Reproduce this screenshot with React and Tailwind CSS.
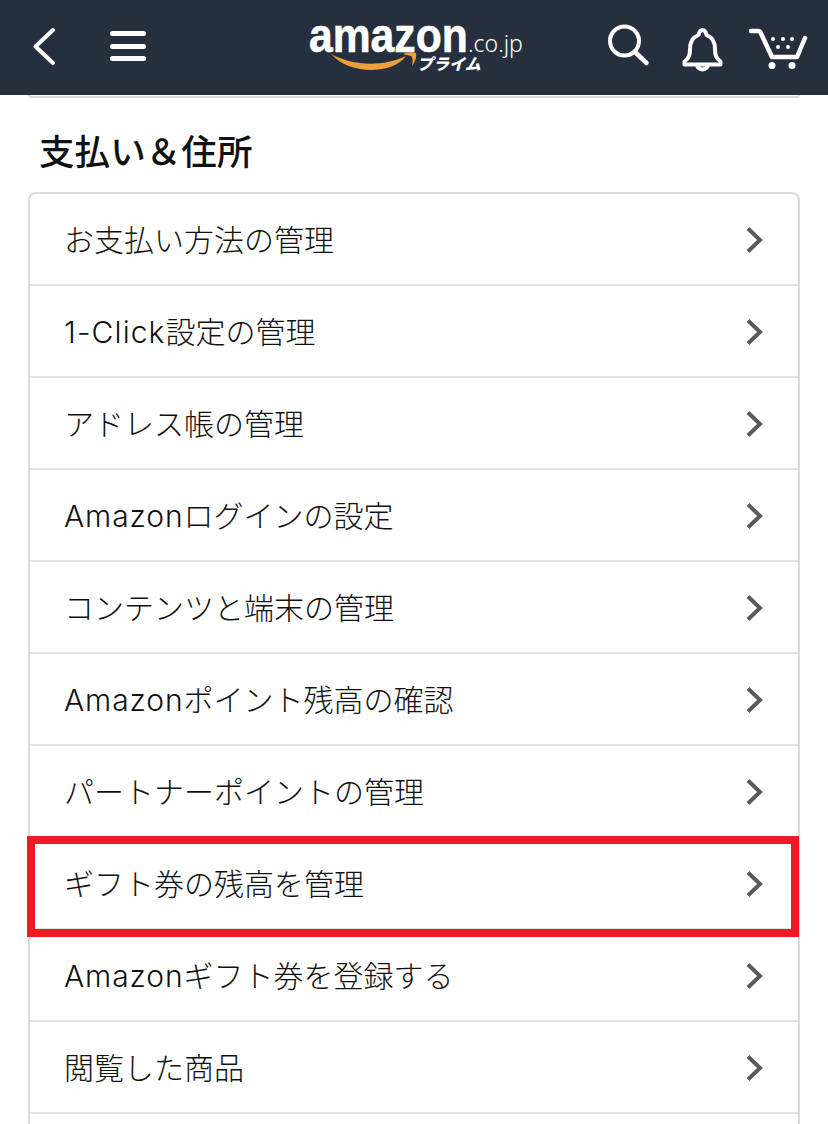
const rows = [
  { text: "お支払い方法の管理" },
  { latin: "1-Click", spacing: "tracking-[1.1px]", text: "設定の管理" },
  { text: "アドレス帳の管理" },
  { latin: "Amazon", spacing: "tracking-[0.9px]", text: "ログインの設定" },
  { text: "コンテンツと端末の管理" },
  { latin: "Amazon", spacing: "tracking-[0.9px]", text: "ポイント残高の確認" },
  { text: "パートナーポイントの管理" },
  { text: "ギフト券の残高を管理", boxed: true },
  { latin: "Amazon", spacing: "tracking-[0.9px]", text: "ギフト券を登録する" },
  { text: "閲覧した商品" },
];

function Chevron() {
  return (
    <svg width="18" height="30" viewBox="0 0 18 30" className="mt-[2px] shrink-0">
      <path d="M3 3.5 L15 15 L3 26.5" fill="none" stroke="#5b5b5b" strokeWidth="4" strokeLinecap="butt" strokeLinejoin="miter" />
    </svg>
  );
}

function Logo() {
  return (
    <div className="relative ml-[163px] flex w-[215px] shrink-0 flex-col pb-[6px] text-white">
      <div className="mt-[2px] flex h-[30px] items-baseline">
        <div className="w-[159px] shrink-0">
          <span className="inline-block origin-left scale-x-[0.87] font-['Liberation_Sans'] text-[49px] font-bold leading-[30px] [-webkit-text-stroke:0.6px_white]">amazon</span>
        </div>
        <span className="font-['Noto_Sans'] text-[23px] font-light leading-[22px]">.co.jp</span>
      </div>
      <span className="ml-[108px] mt-[5px] font-['Noto_Sans_CJK_JP'] text-[16px] font-black italic leading-[16px]">プライム</span>
      <svg width="110" height="59" viewBox="0 0 110 59" className="absolute left-0 top-0">
        <path d="M22 36 C42 47 72 50 97 38 C84 56 42 58 22 36 Z" fill="#ee9f35" />
        <path d="M94 36 C99 34 104 34 107 35 C108 39 106 44 103 48 C104 43 104 40 102 38 C99 37 96 37 94 36 Z" fill="#ee9f35" />
      </svg>
    </div>
  );
}

export default function App() {
  return (
    <div className="h-[1124px] w-[828px] overflow-hidden bg-white font-['Inter','Noto_Sans_CJK_JP',sans-serif] text-[#111]">
      <header className="flex h-[95px] items-center bg-[#262f3e]">
        <svg width="24" height="95" viewBox="0 0 24 95" className="ml-[32px] shrink-0">
          <path d="M21 30 L3.5 46.5 L21 63" fill="none" stroke="#fff" strokeWidth="4" strokeLinecap="round" strokeLinejoin="round" />
        </svg>
        <svg width="36" height="95" viewBox="0 0 36 95" className="ml-[54px] shrink-0">
          <rect x="0" y="31" width="36" height="5" rx="2.5" fill="#fff" />
          <rect x="0" y="44" width="36" height="5" rx="2.5" fill="#fff" />
          <rect x="0" y="56" width="36" height="5" rx="2.5" fill="#fff" />
        </svg>
        <Logo />
        <svg width="44" height="95" viewBox="0 0 44 95" className="ml-[82px] shrink-0">
          <circle cx="18.5" cy="41" r="14.5" fill="none" stroke="#fff" strokeWidth="4" />
          <path d="M29 52 L40.5 63" fill="none" stroke="#fff" strokeWidth="4.5" strokeLinecap="round" />
        </svg>
        <svg width="43" height="95" viewBox="0 0 43 95" className="ml-[31px] shrink-0">
          <path d="M21.5 30 C18.5 30 18 33 17.5 35 C11 37.5 9 43 9 49 C9 55 8 58 3.5 61.5 L3.5 64.5 L39.5 64.5 L39.5 61.5 C35 58 34 55 34 49 C34 43 32 37.5 25.5 35 C25 33 24.5 30 21.5 30 Z" fill="none" stroke="#fff" strokeWidth="4" strokeLinejoin="round" />
          <path d="M16 64.5 C16.5 71 26.5 71 27 64.5" fill="none" stroke="#fff" strokeWidth="4" />
        </svg>
        <svg width="61" height="95" viewBox="0 0 61 95" className="ml-[23px] shrink-0">
          <path d="M4 31 L11 31 C12.5 31 13.5 32 14 33.5 L25 57 L50 57 L58 38" fill="none" stroke="#fff" strokeWidth="4.5" strokeLinecap="round" strokeLinejoin="round" />
          <circle cx="25" cy="65.5" r="3.5" fill="#fff" />
          <circle cx="45" cy="65.5" r="3.5" fill="#fff" />
          {[[26, 39], [36, 39], [45, 39], [31, 47], [41, 47]].map(([x, y]) => (
            <circle key={x + "-" + y} cx={x} cy={y} r="2" fill="#fff" />
          ))}
        </svg>
      </header>

      <div className="mx-[28px] h-[3px] rounded-b-[8px] border-x-2 border-b-2 border-[#dcdcdc]" />

      <h2 className="ml-[39px] mt-[28px] font-['Noto_Sans_CJK_JP'] text-[35.6px] font-medium leading-[48px]">{"支払い\uFF06住所"}</h2>

      <div className="mx-[28px] mt-[18px] rounded-t-[8px] border-x-2 border-t-2 border-[#dcdcdc]">
        {rows.map((row) => (
          <div key={row.text} className="relative flex h-[92px] items-center justify-between border-b-2 border-[#e3e3e3] pl-[34px] pr-[35px]">
            <span className="pt-[2px] text-[30px] font-light leading-[40px] text-[#111]">
              {row.latin && <span className={row.spacing}>{row.latin}</span>}
              {row.text}
            </span>
            <Chevron />
            {row.boxed && (
              <div className="absolute -bottom-[9px] -left-[3px] -right-[1px] -top-[2px] border-[8px] border-[#ed1c24]" />
            )}
          </div>
        ))}
        <div className="h-[92px]" />
      </div>
    </div>
  );
}
